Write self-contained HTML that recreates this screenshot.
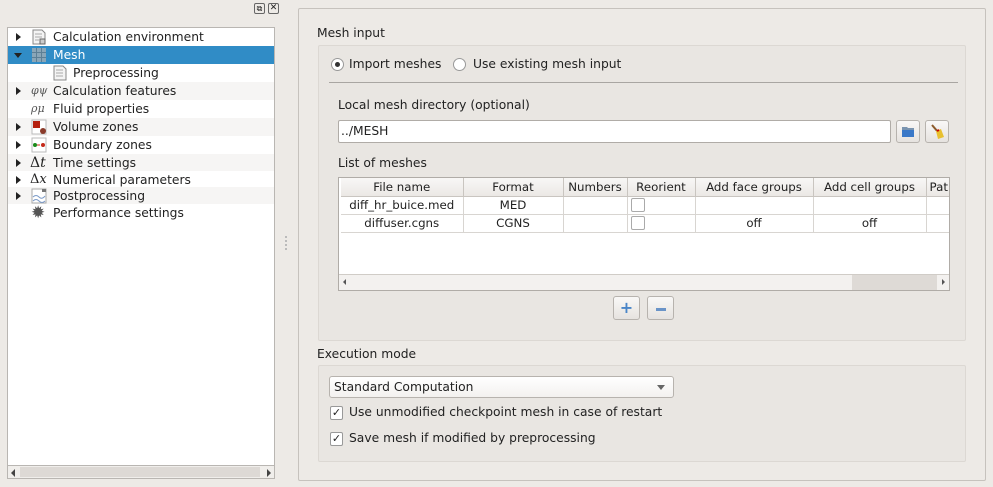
<!DOCTYPE html>
<html><head><meta charset="utf-8"><style>
*{box-sizing:border-box;margin:0;padding:0}
body{width:993px;height:487px;background:#edeae6;font-family:"DejaVu Sans","Liberation Sans",sans-serif;font-size:12.3px;color:#222;position:relative;overflow:hidden}
.a{position:absolute}
.tree{left:7px;top:27px;width:268px;height:439px;background:#fff;border:1px solid #b9b6b2}
.row{position:absolute;left:0;width:266px;height:18px;line-height:18px}
.row.alt{background:#f6f5f4}
.row.sel{background:#308cc6;color:#fff}
.tri{position:absolute;left:8px;top:5px;width:0;height:0;border-top:4px solid transparent;border-bottom:4px solid transparent;border-left:5px solid #222}
.tri.d{left:6px;top:7px;border-left:4px solid transparent;border-right:4px solid transparent;border-top:5px solid #222;border-bottom:0}
.ic{position:absolute;left:23px;top:1px;width:16px;height:16px}
.lbl{position:absolute;left:45px}
.frame{left:298px;top:8px;width:688px;height:473px;border:1px solid #c6c2bd;border-radius:2px}
.grp{border:1px solid #dcd8d3;background:#e9e6e2;border-radius:2px}
.btn{background:linear-gradient(#f9f8f7,#e6e3df);border:1px solid #b7b3ae;border-radius:3px}
table{border-collapse:collapse;font-size:11.8px}
td,th{border-right:1px solid #d8d5d1;border-bottom:1px solid #d8d5d1;text-align:center;font-weight:normal;height:18px;white-space:nowrap;overflow:hidden}
th{background:linear-gradient(#f8f7f6,#ebe8e5);border-color:#c9c5c0}
.cb{display:inline-block;width:14px;height:14px;border:1px solid #aaa;background:#fff;border-radius:2px;vertical-align:middle}
</style></head><body>
<div class="a" style="left:254px;top:3px;width:11px;height:11px;border:1px solid #666;border-radius:2px;font-size:8px;line-height:9px;text-align:center">⧉</div>
<div class="a" style="left:268px;top:3px;width:11px;height:11px;border:1px solid #666;border-radius:2px;font-size:9px;line-height:9px;text-align:center">✕</div>
<div class="a tree">
<div class="row" style="top:0"><div class="tri"></div><svg class="ic" viewBox="0 0 16 16"><path d="M2 1h9l3 3v11H2z" fill="#f4f4f4" stroke="#888"/><path d="M4 5h7M4 8h7M4 11h4" stroke="#aaa"/><rect x="9" y="10" width="5" height="5" fill="#ccc" stroke="#666"/></svg><span class="lbl">Calculation environment</span></div>
<div class="row sel" style="top:18px"><div class="tri d"></div><svg class="ic" viewBox="0 0 16 16"><rect x="1" y="1" width="14" height="14" fill="#8aa6b8"/><path d="M5.5 1v14M10.5 1v14M1 5.5h14M1 10.5h14" stroke="#5d7f95"/></svg><span class="lbl">Mesh</span></div>
<div class="row" style="top:36px"><svg class="ic" style="left:44px" viewBox="0 0 16 16"><path d="M2 1h9l3 3v11H2z" fill="#f4f4f4" stroke="#888"/><path d="M4 5h7M4 8h7M4 11h7" stroke="#aaa"/></svg><span class="lbl" style="left:65px">Preprocessing</span></div>
<div class="row alt" style="top:54px"><div class="tri"></div><span class="ic" style="font-style:italic;font-family:'DejaVu Serif',serif;font-size:11px;line-height:16px;color:#555">φψ</span><span class="lbl">Calculation features</span></div>
<div class="row" style="top:72px"><span class="ic" style="font-style:italic;font-family:'DejaVu Serif',serif;font-size:11px;line-height:16px;color:#555">ρμ</span><span class="lbl">Fluid properties</span></div>
<div class="row alt" style="top:90px"><div class="tri"></div><svg class="ic" viewBox="0 0 16 16"><rect x="1" y="1" width="14" height="14" fill="#fff" stroke="#bbb"/><rect x="2" y="2" width="7" height="7" fill="#b5200f"/><circle cx="12" cy="12" r="3" fill="#8a3b2a"/></svg><span class="lbl">Volume zones</span></div>
<div class="row" style="top:108px"><div class="tri"></div><svg class="ic" viewBox="0 0 16 16"><rect x="1" y="1" width="14" height="14" fill="#fff" stroke="#bbb"/><circle cx="4" cy="8" r="2" fill="#1a8a1a"/><circle cx="12" cy="8" r="2" fill="#c52a1a"/><path d="M6 8h3" stroke="#c52a1a"/></svg><span class="lbl">Boundary zones</span></div>
<div class="row alt" style="top:126px;height:17px"><div class="tri"></div><span class="ic" style="font-family:'DejaVu Serif',serif;font-size:14px;line-height:16px;left:22px">Δ<i>t</i></span><span class="lbl">Time settings</span></div>
<div class="row" style="top:143px;height:17px"><div class="tri"></div><span class="ic" style="font-family:'DejaVu Serif',serif;font-size:13px;line-height:16px;left:22px">Δ<i>x</i></span><span class="lbl">Numerical parameters</span></div>
<div class="row alt" style="top:159px;height:17px"><div class="tri"></div><svg class="ic" viewBox="0 0 16 16"><rect x="1" y="1" width="14" height="14" fill="#fff" stroke="#aaa"/><rect x="11" y="1" width="4" height="3" fill="#777"/><path d="M2 9q3-3 6 0t6-1M2 13q3-3 6 0t6 0" stroke="#7a9ac8" fill="none"/></svg><span class="lbl">Postprocessing</span></div>
<div class="row" style="top:176px"><span class="ic" style="color:#555;font-size:17px;line-height:16px">✹</span><span class="lbl">Performance settings</span></div>
</div>
<div class="a" style="left:7px;top:465px;width:268px;height:14px;background:#f0eeeb;border:1px solid #b9b6b2"><span class="a" style="left:3px;top:3px;border-top:4px solid transparent;border-bottom:4px solid transparent;border-right:4px solid #444"></span><span class="a" style="right:3px;top:3px;border-top:4px solid transparent;border-bottom:4px solid transparent;border-left:4px solid #444"></span><span class="a" style="left:12px;top:1px;width:240px;height:10px;background:#ddd9d5"></span></div>

<div class="a frame"></div>
<div class="a" style="left:317px;top:26px">Mesh input</div>
<div class="a grp" style="left:318px;top:45px;width:648px;height:296px"></div>
<div class="a" style="left:331px;top:58px;width:13px;height:13px;border:1px solid #999;border-radius:50%;background:#fff"><span class="a" style="left:3px;top:3px;width:5px;height:5px;border-radius:50%;background:#333"></span></div>
<div class="a" style="left:349px;top:57px">Import meshes</div>
<div class="a" style="left:453px;top:58px;width:13px;height:13px;border:1px solid #999;border-radius:50%;background:#fff"></div>
<div class="a" style="left:473px;top:57px">Use existing mesh input</div>
<div class="a" style="left:329px;top:82px;width:629px;height:1px;background:#a9a6a2"></div>
<div class="a" style="left:338px;top:98px">Local mesh directory (optional)</div>
<div class="a" style="left:338px;top:120px;width:553px;height:23px;background:#fff;border:1px solid #b0aca7;border-radius:2px;padding:3px 2px">../MESH</div>
<div class="a btn" style="left:896px;top:120px;width:24px;height:23px"><svg width="22" height="21" viewBox="0 0 22 21"><path d="M5 6h5l1 1h6v9H5z" fill="#7a94b0"/><path d="M5 9h12v7H5z" fill="#3a78c8"/></svg></div>
<div class="a btn" style="left:925px;top:120px;width:24px;height:23px"><svg width="22" height="21" viewBox="0 0 22 21"><path d="M6 4l6 7" stroke="#8b5a2b" stroke-width="2"/><path d="M10 10l5-2 3 8-6 2z" fill="#e8c030"/><path d="M11 10l2-1" stroke="#c00" stroke-width="2"/></svg></div>
<div class="a" style="left:338px;top:156px">List of meshes</div>
<div class="a" style="left:338px;top:177px;width:612px;height:114px;background:#fff;border:1px solid #b0aca7;overflow:hidden">
<table style="position:absolute;left:2px;top:0;width:640px;table-layout:fixed">
<colgroup><col style="width:122px"><col style="width:100px"><col style="width:64px"><col style="width:68px"><col style="width:118px"><col style="width:113px"><col style="width:55px"></colgroup>
<tr><th>File name</th><th>Format</th><th>Numbers</th><th>Reorient</th><th>Add face groups</th><th>Add cell groups</th><th style="text-align:left;padding-left:3px">Pat</th></tr>
<tr><td>diff_hr_buice.med</td><td>MED</td><td></td><td style="text-align:left;padding-left:3px"><span class="cb"></span></td><td></td><td></td><td></td></tr>
<tr><td>diffuser.cgns</td><td>CGNS</td><td></td><td style="text-align:left;padding-left:3px"><span class="cb"></span></td><td>off</td><td>off</td><td></td></tr>
</table>
<div class="a" style="left:0;top:96px;width:610px;height:16px;background:#f3f1ef;border-top:1px solid #d0ccc7"><span class="a" style="left:4px;top:4px;border-top:3px solid transparent;border-bottom:3px solid transparent;border-right:3px solid #555"></span><span class="a" style="left:513px;top:0;width:85px;height:15px;background:#dedad6"></span><span class="a" style="right:4px;top:4px;border-top:3px solid transparent;border-bottom:3px solid transparent;border-left:3px solid #555"></span></div>
</div>
<div class="a btn" style="left:613px;top:296px;width:27px;height:24px;text-align:center;line-height:22px;color:#4a86c8;font-weight:bold;font-size:16px">+</div>
<div class="a btn" style="left:647px;top:296px;width:27px;height:24px"><span class="a" style="left:8px;top:11px;width:10px;height:3px;background:#6a94c8"></span></div>

<div class="a" style="left:317px;top:347px">Execution mode</div>
<div class="a grp" style="left:318px;top:365px;width:648px;height:97px"></div>
<div class="a btn" style="left:329px;top:376px;width:345px;height:22px;padding:3px 4px;background:linear-gradient(#fff,#f3f1ef)">Standard Computation<span class="a" style="right:8px;top:8px;border-left:4px solid transparent;border-right:4px solid transparent;border-top:5px solid #666"></span></div>
<div class="a" style="left:330px;top:406px;width:13px;height:14px;border:1px solid #999;background:#fff;border-radius:2px;font-size:11px;line-height:12px;text-align:center;font-weight:bold">✓</div>
<div class="a" style="left:349px;top:405px">Use unmodified checkpoint mesh in case of restart</div>
<div class="a" style="left:330px;top:432px;width:13px;height:14px;border:1px solid #999;background:#fff;border-radius:2px;font-size:11px;line-height:12px;text-align:center;font-weight:bold">✓</div>
<div class="a" style="left:349px;top:431px">Save mesh if modified by preprocessing</div>
<div class="a" style="left:285px;top:236px;width:2px;height:14px;border-left:2px dotted #bbb"></div>
</body></html>
